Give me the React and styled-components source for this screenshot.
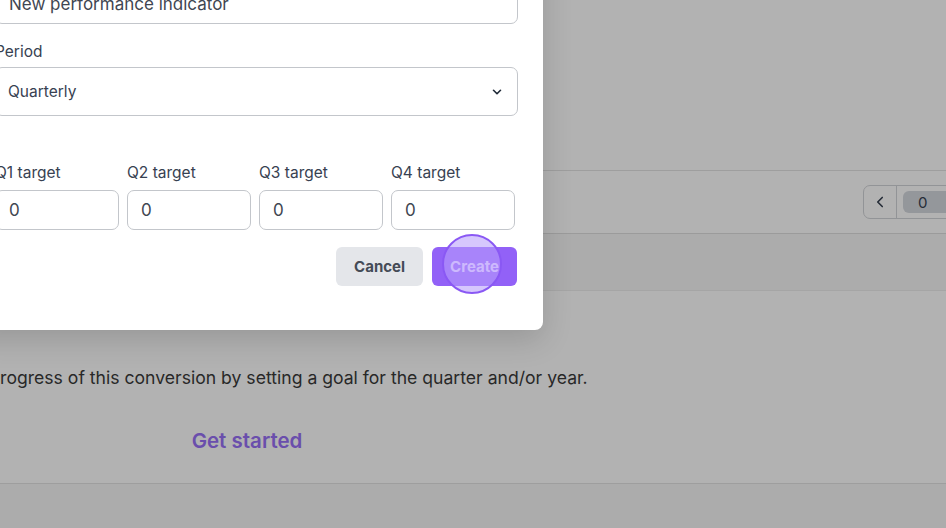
import React from "react";
import styled, { createGlobalStyle } from "styled-components";
import { ChevronDown, ChevronLeft } from "lucide-react";

const GlobalStyle = createGlobalStyle`
  html, body {
    margin: 0;
    padding: 0;
    overflow: hidden;
  }
  body {
    font-family: Inter, "Noto Sans", sans-serif;
    color: #111827;
  }
  * { box-sizing: border-box; }
`;

// Page behind the dialog
const Page = styled.div`
  position: relative;
  width: 946px;
  height: 528px;
  overflow: hidden;
  background: #ffffff;
  display: flex;
  flex-direction: column;
`;

const Header = styled.div`
  height: 171px;
  flex-shrink: 0;
  border-bottom: 1px solid #e3e3e3;
`;

const Toolbar = styled.div`
  height: 63px;
  flex-shrink: 0;
  display: flex;
  align-items: center;
  justify-content: flex-end;
  border-bottom: 1px solid #dedede;
`;

const Pager = styled.div`
  display: flex;
  align-items: center;
  height: 34px;
  margin-right: -20px;
  border: 1px solid #d2d4d8;
  border-radius: 7px;
  overflow: hidden;
`;

const PagerButton = styled.span`
  display: flex;
  align-items: center;
  justify-content: center;
  width: 33px;
  height: 100%;
  color: #374151;
  border-right: 1px solid #d2d4d8;
`;

const PagerCount = styled.span`
  margin: 0 6px;
  width: 56px;
  height: 22px;
  border-radius: 6px;
  background: #d5d8de;
  color: #374151;
  font-size: 15px;
  display: flex;
  align-items: center;
  padding-left: 15px;
`;

const Band = styled.div`
  height: 57px;
  flex-shrink: 0;
  background: #f7f7f7;
  border-bottom: 1px solid #ececec;
`;

const EmptySection = styled.div`
  height: 193px;
  flex-shrink: 0;
  border-bottom: 1px solid #e2e2e2;
`;

const EmptyContent = styled.div`
  width: 900px;
  margin-left: -203px;
  display: flex;
  flex-direction: column;
  align-items: center;
  padding-top: 75px;
`;

const EmptyText = styled.p`
  margin: 0;
  font-size: 17.6px;
  line-height: 24px;
  color: #3a3a3a;
  white-space: nowrap;
`;

const EmptyLink = styled.a`
  margin-top: 38px;
  font-size: 20.5px;
  font-weight: 600;
  color: #9870f7;
  text-decoration: none;
`;

const Footer = styled.div`
  flex: 1;
  background: #f7f7f7;
`;

const Overlay = styled.div`
  position: absolute;
  inset: 0;
  background: rgba(0, 0, 0, 0.3);
`;

// Dialog
const Modal = styled.div`
  position: absolute;
  left: -29px;
  top: -67px;
  width: 572px;
  padding: 24px 25px 44px 24px;
  background: #ffffff;
  border-radius: 8px;
  box-shadow: 0 10px 30px rgba(0, 0, 0, 0.15);
  display: flex;
  flex-direction: column;
`;

const Field = styled.div`
  display: flex;
  flex-direction: column;
  margin-top: ${(p) => p.$gap || 0}px;
`;

const Label = styled.label`
  font-size: 15.5px;
  line-height: 20px;
  color: #374151;
  margin-bottom: ${(p) => p.$space || 7}px;
  white-space: nowrap;
`;

const TextInput = styled.div`
  height: ${(p) => p.$h || 40}px;
  border: 1px solid #c3c6cb;
  border-radius: 7px;
  padding: 0 13px;
  display: flex;
  align-items: center;
  justify-content: space-between;
  font-size: ${(p) => p.$size || 17}px;
  color: #3f4652;
  background: #fff;
`;

const SelectBox = styled(TextInput)`
  padding: 0 13px 0 12px;
  color: #374151;
`;

const TargetGrid = styled.div`
  display: grid;
  grid-template-columns: repeat(4, 124px);
  column-gap: 8px;
  margin-top: 47px;
`;

const Actions = styled.div`
  display: flex;
  justify-content: flex-end;
  gap: 9px;
  margin-top: 17px;
  padding-right: 1px;
`;

const Button = styled.button`
  position: relative;
  height: 39px;
  padding: 0 18px;
  border: none;
  border-radius: 6px;
  font-family: inherit;
  font-size: 15px;
  font-weight: 700;
  background: ${(p) => (p.$primary ? "#9261f7" : "#e4e6ea")};
  color: ${(p) => (p.$primary ? "#e9defe" : "#444b57")};
`;

const ClickRing = styled.span`
  position: absolute;
  left: 50%;
  top: 50%;
  width: 60px;
  height: 60px;
  margin: -33px 0 0 -33px;
  border-radius: 50%;
  background: rgba(185, 158, 252, 0.58);
  border: 2px solid #8a58f4;
`;

const targets = ["Q1", "Q2", "Q3", "Q4"];

export default function App() {
  return (
    <>
      <GlobalStyle />
      <Page>
        <Header />
        <Toolbar>
          <Pager>
            <PagerButton>
              <ChevronLeft size={18} strokeWidth={2.2} />
            </PagerButton>
            <PagerCount>0</PagerCount>
          </Pager>
        </Toolbar>
        <Band />
        <EmptySection>
          <EmptyContent>
            <EmptyText>
              Track the progress of this conversion by setting a goal for the quarter and/or year.
            </EmptyText>
            <EmptyLink href="#">Get started</EmptyLink>
          </EmptyContent>
        </EmptySection>
        <Footer />
        <Overlay />
        <Modal>
          <Field>
            <Label>Name</Label>
            <TextInput>New performance indicator</TextInput>
          </Field>
          <Field $gap={18}>
            <Label $space={5}>Period</Label>
            <SelectBox $h={49} $size={15.5}>
              Quarterly
              <ChevronDown size={14} strokeWidth={2.8} color="#1f2937" />
            </SelectBox>
          </Field>
          <TargetGrid>
            {targets.map((q) => (
              <Field key={q}>
                <Label>{q} target</Label>
                <TextInput>0</TextInput>
              </Field>
            ))}
          </TargetGrid>
          <Actions>
            <Button>Cancel</Button>
            <Button $primary>
              Create
              <ClickRing />
            </Button>
          </Actions>
        </Modal>
      </Page>
    </>
  );
}
